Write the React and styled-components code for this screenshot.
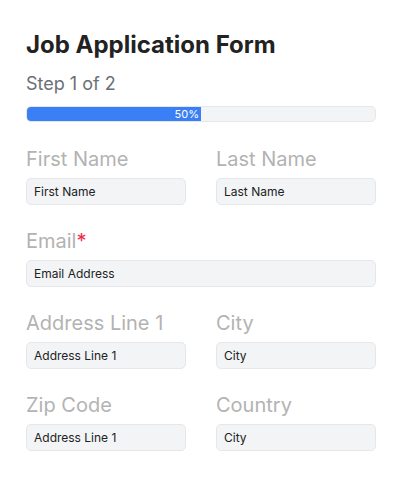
import styled, { createGlobalStyle } from "styled-components"

const GlobalStyle = createGlobalStyle`
  body {
    margin: 0;
    background: #ffffff;
    font-family: Inter, "Noto Sans", sans-serif;
  }
`

const Page = styled.div`
  padding: 30px 24px 0 26px;
  width: 400px;
  box-sizing: border-box;
`
const Title = styled.h2`
  margin: 0;
  font-size: 24px;
  line-height: 30px;
  font-weight: 700;
  color: #222222;
`
const Step = styled.p`
  margin: 12px 0 0;
  font-size: 18px;
  line-height: 24px;
  color: #6b6f76;
`
const Progress = styled.div`
  margin-top: 10px;
  height: 16px;
  background: #f3f4f6;
  border: 1px solid #e6e7ea;
  border-radius: 5px;
  box-sizing: border-box;
  overflow: hidden;
`
const Fill = styled.div`
  height: 100%;
  background: #3b7ff6;
  color: #ffffff;
  font-size: 11px;
  line-height: 14px;
  text-align: right;
  padding-right: 2px;
  box-sizing: border-box;
`
const Grid = styled.div`
  margin-top: 25px;
  display: grid;
  grid-template-columns: 160px 160px;
  column-gap: 30px;
  row-gap: 24px;
`
const Field = styled.div`
  display: flex;
  flex-direction: column;
  grid-column: ${({ $wide }) => ($wide ? "1 / span 2" : "auto")};
`
const Label = styled.label`
  font-size: 20px;
  line-height: 24px;
  color: #b3b3b3;
  margin-bottom: 7px;
`
const Star = styled.span`
  color: #ee2b47;
`
const Input = styled.input`
  height: 27px;
  box-sizing: border-box;
  border: 1px solid #e6e7ea;
  border-radius: 5px;
  background: #f3f4f6;
  padding: 0 7px;
  font-family: Inter, "Noto Sans", sans-serif;
  font-size: 12px;
  color: #222222;
  outline: none;
`

const fields = [
  { label: "First Name", value: "First Name" },
  { label: "Last Name", value: "Last Name" },
  { label: "Email", value: "Email Address", wide: true, required: true },
  { label: "Address Line 1", value: "Address Line 1" },
  { label: "City", value: "City" },
  { label: "Zip Code", value: "Address Line 1" },
  { label: "Country", value: "City" },
]

const App = () => {
  const percent = 50
  return (
    <Page>
      <GlobalStyle />
      <Title>Job Application Form</Title>
      <Step>Step 1 of 2</Step>
      <Progress>
        <Fill style={{ width: `${percent}%` }}>{percent}%</Fill>
      </Progress>
      <Grid>
        {fields.map((f) => (
          <Field key={f.label} $wide={f.wide}>
            <Label>
              {f.label}
              {f.required && <Star>*</Star>}
            </Label>
            <Input defaultValue={f.value} />
          </Field>
        ))}
      </Grid>
    </Page>
  )
}

export default App
